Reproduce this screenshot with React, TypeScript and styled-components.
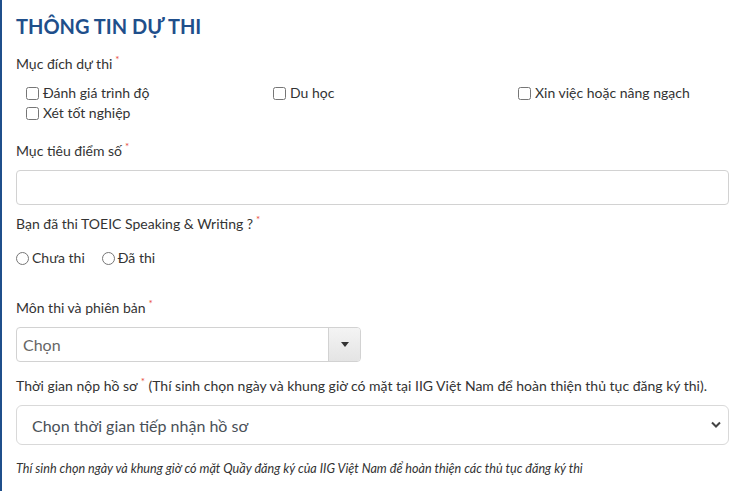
import styled, { createGlobalStyle } from 'styled-components';

const GlobalStyle = createGlobalStyle`
  html, body {
    margin: 0;
    padding: 0;
    background: #fff;
  }
  body {
    font-family: Lato, "Open Sans", sans-serif;
    color: #333;
  }
  * {
    box-sizing: border-box;
  }
`;

const Panel = styled.section`
  width: 744px;
  height: 491px;
  border-left: 2px solid #1f4f8b;
  padding: 12px 15px 0 14px;
  overflow: hidden;
`;

const Heading = styled.h2`
  margin: 0 0 14px 0;
  font-size: 20px;
  font-weight: 700;
  color: #1f4f8b;
  line-height: 28px;
`;

const Label = styled.label`
  display: block;
  font-size: 14px;
  line-height: 20px;
  color: #333;
  margin-bottom: 9px;
  white-space: nowrap;
`;

const Star = styled.sup`
  color: #e84c3d;
  font-size: 10px;
  margin-left: 3px;
  vertical-align: 6px;
  line-height: 0;
`;

const Field = styled.div<{ gap?: number }>`
  margin-bottom: ${({ gap }) => gap ?? 12}px;
`;

const CheckGrid = styled.div`
  display: grid;
  grid-template-columns: 247px 245px 1fr;
  padding-left: 10px;
`;

const Option = styled.label`
  display: flex;
  align-items: center;
  font-size: 14px;
  line-height: 20px;
  color: #333;
  white-space: nowrap;
`;

const Check = styled.input`
  width: 13px;
  height: 13px;
  margin: 0 4px 0 0;
`;

const RadioRow = styled.div`
  display: flex;
  gap: 17px;
  padding-top: 5px;
`;

const Radio = styled.input`
  width: 13px;
  height: 13px;
  margin: 0 3px 0 0;
`;

const TextInput = styled.input`
  display: block;
  width: 100%;
  height: 35px;
  border: 1px solid #d2d2d2;
  border-radius: 4px;
  padding: 6px 12px;
  font-family: inherit;
  font-size: 14px;
  outline: none;
`;

const ComboBox = styled.div`
  display: flex;
  width: 345px;
  height: 35px;
  border: 1px solid #d2d2d2;
  border-radius: 4px;
  overflow: hidden;
`;

const ComboText = styled.span`
  flex: 1;
  padding: 0 6px;
  font-size: 16px;
  line-height: 33px;
  color: #666;
`;

const ComboArrow = styled.span`
  width: 32px;
  border-left: 1px solid #d2d2d2;
  background: linear-gradient(#f4f4f4, #e4e4e4);
  display: flex;
  align-items: center;
  justify-content: center;
`;

const SelectWrap = styled.div`
  position: relative;
  width: 100%;
`;

const Select = styled.select`
  display: block;
  width: 100%;
  height: 40px;
  appearance: none;
  border: 1px solid #d9d9d9;
  border-radius: 6px;
  background: #fff;
  padding: 0 15px;
  font-family: inherit;
  font-size: 16px;
  color: #495057;
  outline: none;
`;

const Chevron = styled.svg`
  position: absolute;
  right: 8px;
  top: 16px;
  pointer-events: none;
`;

const Note = styled.p`
  margin: 0;
  font-size: 12.6px;
  line-height: 17px;
  font-style: italic;
  color: #333;
`;

export default function App() {
  return (
    <>
      <GlobalStyle />
      <Panel>
        <Heading>THÔNG TIN DỰ THI</Heading>

        <Field gap={18}>
          <Label>
            Mục đích dự thi<Star>*</Star>
          </Label>
          <CheckGrid>
            <Option>
              <Check type="checkbox" />
              Đánh giá trình độ
            </Option>
            <Option>
              <Check type="checkbox" />
              Du học
            </Option>
            <Option>
              <Check type="checkbox" />
              Xin việc hoặc nâng ngạch
            </Option>
            <Option>
              <Check type="checkbox" />
              Xét tốt nghiệp
            </Option>
          </CheckGrid>
        </Field>

        <Field gap={9}>
          <Label>
            Mục tiêu điểm số<Star>*</Star>
          </Label>
          <TextInput type="text" />
        </Field>

        <Field gap={30}>
          <Label>
            Bạn đã thi TOEIC Speaking &amp; Writing ?<Star>*</Star>
          </Label>
          <RadioRow>
            <Option>
              <Radio type="radio" name="tested" />
              Chưa thi
            </Option>
            <Option>
              <Radio type="radio" name="tested" />
              Đã thi
            </Option>
          </RadioRow>
        </Field>

        <Field gap={14}>
          <Label>
            Môn thi và phiên bản<Star>*</Star>
          </Label>
          <ComboBox>
            <ComboText>Chọn</ComboText>
            <ComboArrow>
              <svg width="8" height="5" viewBox="0 0 8 5">
                <path d="M0 0h8L4 5z" fill="#333" />
              </svg>
            </ComboArrow>
          </ComboBox>
        </Field>

        <Field gap={15}>
          <Label>
            Thời gian nộp hồ sơ<Star>*</Star> (Thí sinh chọn ngày và khung giờ có mặt tại IIG Việt
            Nam để hoàn thiện thủ tục đăng ký thi).
          </Label>
          <SelectWrap>
            <Select defaultValue="">
              <option value="">Chọn thời gian tiếp nhận hồ sơ</option>
            </Select>
            <Chevron width="10" height="7" viewBox="0 0 10 7">
              <path d="M1 1.5l4 4 4-4" stroke="#444" strokeWidth="2" fill="none" />
            </Chevron>
          </SelectWrap>
        </Field>

        <Note>
          Thí sinh chọn ngày và khung giờ có mặt Quầy đăng ký của IIG Việt Nam để hoàn thiện các
          thủ tục đăng ký thi
        </Note>
      </Panel>
    </>
  );
}
